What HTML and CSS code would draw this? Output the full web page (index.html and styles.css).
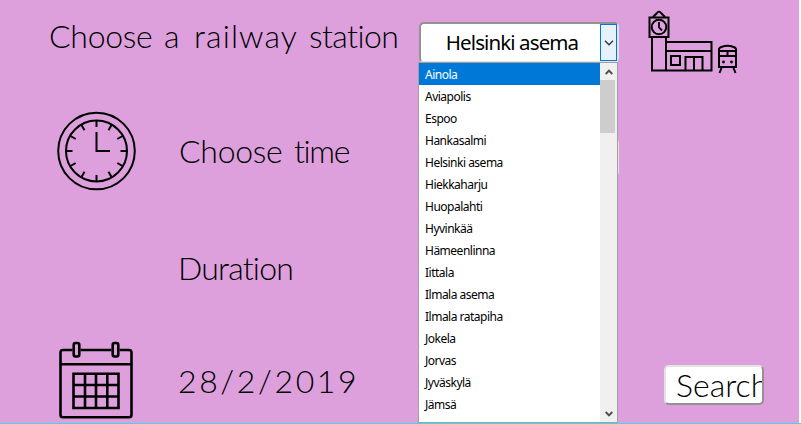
FILE: index.html
```html
<!DOCTYPE html>
<html lang="en">
<head>
<meta charset="utf-8">
<title>Railway station search</title>
<link rel="stylesheet" href="styles.css">
</head>
<body>
<main class="panel">
  <section class="row row-station">
    <h1 class="label label-station"><span class="w-choose">Choose</span> <span class="w-a">a</span> <span class="w-railway">railway</span> <span class="w-station">station</span></h1>
    <div class="select">
      <div class="select-box">
        <span class="select-value">Helsinki asema</span>
        <span class="select-arrow"><svg width="10" height="6" viewBox="0 0 10 6"><path d="M1 .8 5 4.8 9 .8" fill="none" stroke="#333" stroke-width="1.3"/></svg></span>
      </div>
      <div class="menu">
        <ul class="options">
          <li class="active">Ainola</li>
          <li>Aviapolis</li>
          <li>Espoo</li>
          <li>Hankasalmi</li>
          <li>Helsinki asema</li>
          <li>Hiekkaharju</li>
          <li>Huopalahti</li>
          <li>Hyvinkää</li>
          <li>Hämeenlinna</li>
          <li>Iittala</li>
          <li>Ilmala asema</li>
          <li>Ilmala ratapiha</li>
          <li>Jokela</li>
          <li>Jorvas</li>
          <li>Jyväskylä</li>
          <li>Jämsä</li>
        </ul>
        <div class="scrollbar">
          <span class="scroll-button"><svg width="8" height="6" viewBox="0 0 8 6"><path d="M.7 5 4 1.6 7.3 5" fill="none" stroke="#505050" stroke-width="2"/></svg></span>
          <span class="thumb"></span>
          <span class="scroll-button scroll-down"><svg width="8" height="6" viewBox="0 0 8 6"><path d="M.7 1 4 4.4 7.3 1" fill="none" stroke="#505050" stroke-width="2"/></svg></span>
        </div>
      </div>
    </div>
    <svg class="icon-station" width="92" height="64" viewBox="647 10 92 64" fill="none" stroke="#000" stroke-width="2">
      <path d="M649.5 17.5h19v19.5h-19zM652 37v33.5M666 37v33.5M651 70.500h60.500V42H666M666 51h45.500M671 56h9v9h-9zM685.500 70V57h17v13M694 57v13"/>
      <path d="M653 17l3.500-3.500q2.500-3.500 5 0L665 17"/>
      <circle cx="659" cy="27" r="7.300"/>
      <path d="M659 22v5.500l3 3" stroke-width="1.800"/>
      <path d="M719 67V49.500q0-2 3-2.800 5.500-1.700 11 0 3 .8 3 2.800V67zM719 51h17M719 56h17M727.500 51v5M721.500 68l-2 5M733.500 68l2 5"/>
      <g fill="#000" stroke="none"><circle cx="723.500" cy="62" r="1.400"/><circle cx="731.500" cy="62" r="1.400"/></g>
    </svg>
  </section>
  <section class="row row-time">
    <svg class="icon" width="80" height="80" viewBox="-39.500 -40 80 80" fill="none" stroke="#000" stroke-width="2">
      <circle r="38.300"/><circle r="30.500"/>
      <path d="M0-19V0H13.500"/>
      <path d="M0-30v6M0 30v-6M-30 0h6M30 0h-6M15-26l-3 5.200M26-15l-5.200 3M26 15l-5.200-3M15 26l-3-5.200M-15 26l3-5.200M-26 15l5.200-3M-26-15l5.200 3M-15-26l3 5.200"/>
    </svg>
    <h2 class="label label-time"><span class="w-choose">Choose</span> <span class="w-time">time</span></h2>
    <div class="field"></div>
  </section>
  <section class="row row-duration">
    <h2 class="label label-duration">Duration</h2>
  </section>
  <section class="row row-date">
    <svg class="icon icon-calendar" width="74" height="78" viewBox="59 341 74 78" fill="none" stroke="#000" stroke-width="2.600">
      <path d="M72.500 350H63q-2.500 0-2.500 2.500V415q0 2.300 2.500 2.300H129q2.500 0 2.500-2.300V352.500q0-2.500-2.500-2.500H119.500M80.500 350H111.500M60.500 364.300h71"/>
      <rect x="73.700" y="343" width="5.600" height="13.500" rx="2"/>
      <rect x="112.700" y="343" width="5.600" height="13.500" rx="2"/>
      <path d="M73.500 373.700h45v34.300h-45zM85 374v34M96 374v34M107.300 374v34M74 385h44M74 396.500h44"/>
    </svg>
    <h2 class="label label-date">28/2/2019</h2>
    <button class="search"><span>Search</span></button>
  </section>
</main>
</body>
</html>
```
FILE: styles.css
```css
* { box-sizing: border-box; }
body { margin: 0; background: #fff; overflow: hidden; }
.panel {
  width: 801px;
  height: 424px;
  background: linear-gradient(90deg, #dda0dd 799px, #fff 799px);
  border-bottom: 1px solid #40d8e4;
  font-family: Lato, "Open Sans", sans-serif;
}
.row { display: flex; align-items: flex-start; }
.row-station { height: 96px; padding: 10px 0 0 49px; }
.row-time { height: 120px; padding: 15px 0 0 57px; }
.row-duration { height: 110px; padding: 34px 0 0 179px; }
.row-date { height: 97px; padding: 15px 0 0 59px; }
.label {
  display: flex;
  margin: 0;
  font-size: 32px;
  font-weight: 300;
  font-variant-ligatures: none;
  line-height: 40px;
  white-space: nowrap;
  color: #000;
}
.label-station { width: 370px; margin-top: 6px; }
.w-choose { width: 115px; letter-spacing: -0.3px; }
.w-a { width: 30px; }
.w-railway { width: 115px; letter-spacing: 1.1px; }
.w-station { letter-spacing: -0.6px; }
.w-time { letter-spacing: -1.4px; }
.label-time { width: 240px; margin: 20px 0 0 41px; padding-left: 1px; }
.label-duration { margin-top: -2px; margin-left: -1px; letter-spacing: -0.8px; }
.label-date { width: 486px; margin: 20px 0 0 45px; letter-spacing: 2.6px; }

.select { position: relative; width: 200px; margin-top: 12px; }
.select-box {
  display: flex;
  height: 41px;
  background: #fff;
  border: 2px solid;
  border-color: #929292 #e3e3e3 #e3e3e3 #929292;
  border-radius: 5px;
}
.select-value {
  flex: 1;
  padding-left: 3px;
  text-align: center;
  font: 20.5px/37px "Noto Sans", sans-serif;
  letter-spacing: -0.9px;
}
.select-arrow {
  display: flex;
  align-items: center;
  justify-content: center;
  width: 17px;
  background: #e5f1fb;
  border: 1px solid #0078d7;
}
.menu {
  position: absolute;
  top: 40px;
  left: -1px;
  z-index: 2;
  display: flex;
  width: 200px;
  height: 361px;
  background: #fff;
  border: 1px solid #a0a0a0;
}
.options {
  flex: 1;
  margin: 0;
  padding: 0;
  list-style: none;
  font: 12px/24px "Noto Sans", sans-serif;
  letter-spacing: -0.5px;
  color: #000;
}
.options li { height: 22px; padding-left: 6px; }
.options .active { background: #0078d7; color: #fff; }
.scrollbar { display: flex; flex-direction: column; width: 17px; background: #f0f0f0; }
.scroll-button { display: flex; align-items: center; justify-content: center; height: 17px; }
.thumb { width: 15px; height: 53px; background: #cdcdcd; }
.scroll-down { margin-top: auto; }
.icon-station { margin-left: 28px; }
.field {
  width: 201px;
  height: 39px;
  margin-top: 27px;
  background: #fff;
  border: 2px solid;
  border-color: #929292 #e3e3e3 #e3e3e3 #929292;
  border-radius: 5px;
}
.search {
  width: 100px;
  height: 40px;
  margin-top: 24px;
  padding: 0 0 0 10px;
  overflow: hidden;
  background: #fff;
  border: 2px solid;
  border-color: #e3e3e3 #929292 #929292 #e3e3e3;
  border-radius: 5px;
  font: 300 32px/36px Lato, sans-serif;
  text-align: left;
  color: #000;
}
```
